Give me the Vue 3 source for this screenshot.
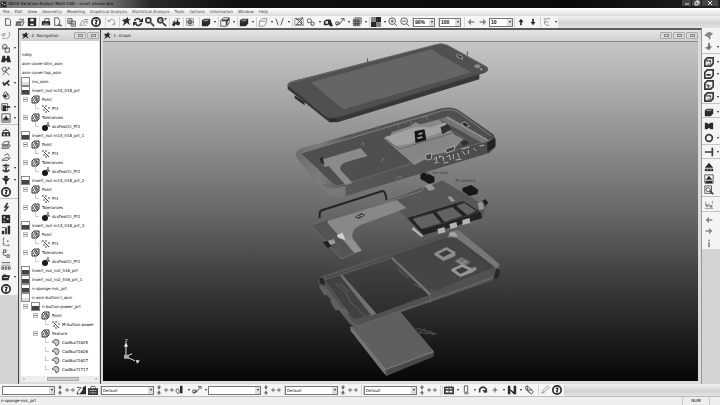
<script setup>
import { h } from 'vue'

// Each icon is a list of [kind, path]: f = dark fill, g = grey fill, l = light fill, s = stroke, b = bold stroke, t = thin grey stroke
const icons = {
  new: [['s', 'M3 2h4l2 2v6H3z']],
  open: [['g', 'M1 5h7l-1 5H1z'], ['s', 'M1 10L3 6h8l-2 4zM5 3q3-2 4 1M10 2v2H8']],
  save: [['f', 'M1 1h10v10H1z'], ['l', 'M4 2h4v3H4zM4 8h4v2H4z']],
  print: [['f', 'M1 5h10v5H1z'], ['s', 'M4 5l1-3h5L9 5'], ['l', 'M3 8h6v1H3z']],
  preview: [['s', 'M2 1h4l2 3v6H2zM6 8l4 3M6 10h5']],
  copy: [['s', 'M1 2h5v6H1zM5 5h5v6H5z'], ['g', 'M2 4h3v3H2zM6 7h3v3H6z']],
  paste: [['t', 'M1 10l3-6 3 2-3 4zM6 3h5M7 5h4M8 7h3M6 10h3']],
  help: [['f', 'M6 0a6 6 0 100 12A6 6 0 006 0zm0 2a4 4 0 110 8 4 4 0 010-8z'], ['f', 'M4 4q2-2 4 0 0 2-1 2v3H5V6h1V5z']],
  undo: [['t', 'M2 6q1-4 5-3 3 2 2 5l-3 1M4 4L2 6 1 3M8 10l2-2']],
  fly: [['f', 'M1 1l4 2 3-3 1 3 3-1-3 3 2 5-4-3-5 4 2-5-3-2 3-1z']],
  rotate: [['b', 'M2 5q1-4 5-3l2 2M10 7q-1 4-5 3L3 8'], ['f', 'M12 1v5H7zM0 11V6h5z']],
  zoom: [['b', 'M7 7l4 4M4 1a3 3 0 100 6 3 3 0 000-6z']],
  zoomwin: [['b', 'M7 7l4 4M4 1a3 3 0 100 6 3 3 0 000-6z'], ['s', 'M9 2h3M10 1v3M3 4h3']],
  run: [['f', 'M1 10l3-6 2 3 2-5 1 4h2l-1 4H7L6 8l-2 3z'], ['t', 'M5 2h6M1 6h5']],
  fit: [['s', 'M6 1v10M1 6h10M4 4h4v4H4z'], ['t', 'M2 2h8v8H2z']],
  cube: [['f', 'M1 4l3-2h7v6l-3 3H1z'], ['g', 'M4 3h6L8 5H2z']],
  cubeopen: [['s', 'M1 4l3-3h7v6l-3 4H1z'], ['l', 'M2 5h5v4H2z'], ['b', 'M8 10V5l3-3M2 4h6']],
  wire: [['t', 'M2 5l3-3h6L9 9 7 11H1zM2 5h7']],
  vee: [['s', 'M1 2l3 8M10 1L7 10']],
  mesh: [['t', 'M1 2h10v8H1z'], ['s', 'M2 1l9 9M3 3q5-1 6 3T4 9M10 2L2 10M8 1h3']],
  gears: [['s', 'M4 2a2 2 0 100 5 2 2 0 000-5zM8 6a2 2 0 100 4 2 2 0 000-4zM6 9l2 2']],
  part: [['f', 'M1 5l3-2h5l3 8H8L7 9 5 10H1z'], ['l', 'M3 5h3v3H3z']],
  arrowtool: [['s', 'M2 11l2-4 2 1 4-6M7 2h4v3M1 6h4v3H1z']],
  grid: [['g', 'M1 2h9v9H1z'], ['s', 'M1 5h9M1 8h9M4 2v9M7 2v9M3 1h8v7']],
  checker: [['f', 'M6 0h6v6H6zM0 6h6v6H0z'], ['g', 'M0 0h6v6H0zM6 6h6v6H6z']],
  plus: [['s', 'M5 1a4 4 0 100 8 4 4 0 000-8zM3 5h4M5 3v4M8 8l3 3']],
  minus: [['s', 'M5 1a4 4 0 100 8 4 4 0 000-8zM3 5h4M8 8l3 3']],
  left: [['g', 'M2 6l4-4v3h4v2H6v3z']],
  right: [['g', 'M10 6L6 2v3H2v2h4v3z']],
  up: [['f', 'M6 2l3 4H7v4H5V6H3z']],
  down: [['f', 'M6 10L3 6h2V2h2v4h2z']],
  branch: [['t', 'M10 2H6L3 5v3l3 2h3M3 6h5M2 2h3']],
  curve: [['t', 'M1 4l4-1-2 4zM6 9q5-1 4-6M2 9h3M9 1l2 2']],
  duplicate: [['s', 'M2 3q3-3 5 0v4H2zM5 6h5v5H5z'], ['t', 'M2 5h5']],
  binoc: [['f', 'M2 2h3v3h2V2h3l2 8H7V8H5v2H0z']],
  hammer: [['s', 'M1 3l4-2 2 3-4 3zM5 6l5 5M10 2L2 11M8 1l3 3']],
  check: [['b', 'M2 5l3 4M10 3l-7 6M7 6l3 3']],
  shapes: [['s', 'M2 7l3-5 3 2-1 4zM7 5a3 3 0 100 6 3 3 0 000-6z'], ['f', 'M3 6h3v3H3z']],
  door: [['s', 'M1 2h7v8H1z'], ['f', 'M2 4h4v7H2z'], ['f', 'M6 5h5v2H6z']],
  picture: [['s', 'M1 1h10v10H1z'], ['g', 'M2 6h8v4H2z'], ['f', 'M6 3l3 5H3z']],
  house: [['s', 'M2 5l4-4 4 4M2 3h7'], ['f', 'M1 5h10v5H1z'], ['l', 'M3 7h2v2H3zM7 7h2v2H7z']],
  layer: [['s', 'M1 6l3-4h6L8 6zM1 10l2-4h8l-2 4z'], ['g', 'M3 7h6v2H3z']],
  ramp: [['s', 'M1 10h7l3-3H5zM4 4l4-2 2 3']],
  anchor: [['b', 'M6 1v9M2 3h8M2 8q4 5 8 0'], ['g', 'M3 5h6v1H3z']],
  funnel: [['f', 'M1 4h10L7 8v3H5V8z'], ['f', 'M4 1h4v3H4z']],
  bolt: [['b', 'M8 1L5 6h3l-4 5']],
  filmdots: [['f', 'M1 1h10v10H1z'], ['l', 'M3 3h2v2H3zM7 5h2v2H7zM3 8h2v1H3z']],
  bars: [['f', 'M1 7h3v4H1zM5 3h2v8H5zM8 1h3v10H8z'], ['s', 'M1 3h4']],
  points: [['g', 'M2 1h2v2H2zM7 4h2v2H7zM2 7h2v2H2zM8 9h2v2H8z'], ['t', 'M3 2v8h7']],
  chain: [['s', 'M3 1h3v3H3zM7 7h3v3H7zM2 4q0 4 4 4']],
  abacus: [['s', 'M1 2h10M1 7h2v3H1zM5 7h2v3H5zM9 7h2v3H9z'], ['t', 'M1 5h10']],
  folder: [['f', 'M1 5l2-2h3l1 1h4l-2 6H1z'], ['l', 'M3 6h6L8 7H3z']],
  camera: [['g', 'M1 4l5-3 5 2-4 4zM5 7l2 4 1-4z'], ['s', 'M1 5l5 2']],
  man: [['g', 'M5 1h2v4h3L6 10 1 7l4-2z'], ['s', 'M6 2v6']],
  boxdots: [['b', 'M1 4l3-3h7v7l-3 3H1z'], ['f', 'M3 5h2v1H3zM6 5h2v1H6zM4 8h3v1H4z'], ['s', 'M2 4h6v6']],
  boxline: [['b', 'M1 4l3-3h7v7l-3 3H1z'], ['f', 'M3 6h5v2H3z']],
  boxcross: [['b', 'M1 4l3-3h7v7l-3 3H1z'], ['s', 'M3 7h5M5 5v5M3 5l4 4']],
  books: [['f', 'M1 2h3l1 2 3-2h3v8H8L6 8l-2 2H1z']],
  ring: [['b', 'M6 2a4 4 0 100 8 4 4 0 000-8z']],
  tee: [['b', 'M10 1v10M1 6h9']],
  warn: [['f', 'M6 1l5 6H1z'], ['f', 'M1 8h10v3H1z'], ['l', 'M3 9h2v1H3zM7 9h2v1H7z']],
  warnbox: [['s', 'M1 1h10v10H1z'], ['f', 'M6 2l4 5H2zM2 8h8v3H2z']],
  lens: [['s', 'M1 1h8v9H1zM5 3a2 2 0 100 5 2 2 0 000-5z'], ['b', 'M7 7l4 4']],
  people: [['t', 'M2 2v4M6 4v4M10 1v4M1 10h10'], ['g', 'M2 5h3v3H2zM7 6h3v3H7z']],
  info: [['g', 'M5 2h2v2H5zM5 5h2v6H5z']],
  vert: [['g', 'M6 0l3 3H7v2H5V3H3zM6 12L3 9h2V7h2v2h2z'], ['f', 'M5 3h2v1H5zM5 8h2v1H5z']],
  horiz: [['g', 'M0 6l3-3v2h2v2H3v2zM12 6L9 3v2H7v2h2v2z']],
  chart: [['f', 'M8 3l4-2v10H8zM1 8l3 3 4-5v5H1z'], ['s', 'M1 3h5L2 8']],
  calc: [['b', 'M1 5h10v6H1zM1 8h10'], ['s', 'M3 5q0-5 3-3 3-2 3 3M4 5v6M8 5v6']],
  table: [['b', 'M1 3h10v7H1zM1 6h10'], ['s', 'M3 1v2M6 1v9M9 1v2']],
  paint: [['f', 'M6 1h3v9H6z'], ['s', 'M2 5q3-1 3 3T2 9q-2-2 0-4z']],
  pen: [['s', 'M4 1h4v6l-2 4-2-3z'], ['g', 'M4 8h5v3H4z']],
  loop: [['b', 'M2 9V5q4-5 8 0v4M7 8h3'], ['f', 'M5 6h4v4z']],
  cross: [['s', 'M6 3v6M3 6h6']],
  skip: [['f', 'M1 1h3v4l4 3V1h3v10H8L4 7v4H1z']],
  pencils: [['s', 'M1 3l3-2 7 7-2 3zM4 1v5h6M2 5l5 5']],
  brush: [['t', 'M2 10l2-4 5-5 2 2-5 5z']],
}

const Icon = (p) =>
  h('svg', { class: 'ico', viewBox: '0 0 12 12', 'aria-hidden': 'true' },
    icons[p.name].map(([k, d]) => h('path', { class: 'k' + k, d })))
Icon.props = ['name']

const menus = ['File', 'Edit', 'View', 'Geometry', 'Modeling', 'Graphical Analysis', 'Statistical Analysis', 'Tools', 'Options', 'Information', 'Window', 'Help']

// Bar tokens: icon name, "^" drop-down caret, "|" narrow gap, "||" wide gap, "=text" small select, "==text" wide select
const parse = (s) => s.split(';').map((t) => {
  if (t === '^') return { kind: 'caret' }
  if (t === '|' || t === '||') return { kind: 'gap', wide: t === '||' }
  if (t[0] === '=') return { kind: 'select', wide: t[1] === '=', text: t.replace(/=/g, '') }
  return { kind: 'icon', name: t }
})
const topBar = parse('new;open;save;|;print;preview;|;copy;paste;help;||;undo;|;fly;rotate;zoom;zoomwin;|;run;|;fit;||;cube;^;|;cubeopen;^;|;cube;^;|;wire;^;vee;^;|;mesh;gears;^;part;arrowtool;^;grid;^;|;checker;^;plus;minus;|;=90%;||;=100;||;left;right;=10;|;up;down;|;branch;^')
const bottomBar = parse('==;vert;horiz;chart;calc;|;==Default;vert;horiz;paint;^;arrowtool;^;==;vert;horiz;||;==Default;vert;horiz;||;|;==Default;vert;horiz;||;|;table;^;pen;^;loop;cross;^;skip;^;pencils;||;brush;help;|')

const rail = (s) => s.split('|').map((g) => g.split(' ').map((n) => ({ name: n.replace('^', ''), caret: n.endsWith('^') })))
const leftRail = rail('curve duplicate^ binoc hammer check^ shapes door^ picture^|house layer ramp anchor^ funnel^ help|bolt filmdots bars points chain abacus folder^ help')
const rightRail = rail('camera man^|boxdots^ boxline^ boxcross boxdots^|cube^|books ring^|tee^|warn warnbox lens|people|left right info')

const nut = (name) => [
  { lvl: 0, ico: 'prt', t: name },
  { lvl: 1, tog: true, ico: 'box', t: 'Point' },
  { lvl: 2, leaf: true, ico: 'pts', t: 'Pt1' },
  { lvl: 1, tog: true, ico: 'box', t: 'Tolerances' },
  { lvl: 2, leaf: true, ico: 'ball', t: 'dcsFeatCr_Pt1' },
]
const tree = [
  { lvl: 0, t: 'mbly' },
  { lvl: 0, t: 'asm-cover-btm_asm' },
  { lvl: 0, t: 'asm-cover-top_asm' },
  { lvl: 0, ico: 'asm', t: 'ms_asm' },
  ...nut('insert_nut-m14_h18_prt'),
  ...nut('insert_nut-m14_h18_prt_1'),
  ...nut('insert_nut-m14_h18_prt_2'),
  ...nut('insert_nut-m14_h18_prt_3'),
  { lvl: 0, ico: 'prt', t: 'insert_nut_m2_h16_prt' },
  { lvl: 0, ico: 'prt', t: 'insert_nut_m2_h16_prt_1' },
  { lvl: 0, ico: 'prt', t: 'n-sponge-mic_prt' },
  { lvl: 0, ico: 'asm', t: 'n-asm-button-I_asm' },
  { lvl: 1, tog: true, ico: 'prt', t: 'n-button-power_prt' },
  { lvl: 2, tog: true, ico: 'box', t: 'Point' },
  { lvl: 3, leaf: true, ico: 'pts', t: 'M-button-power' },
  { lvl: 2, tog: true, ico: 'box', t: 'Feature' },
  { lvl: 3, leaf: true, ico: 'surf', t: 'CadSurf1625' },
  { lvl: 3, leaf: true, ico: 'surf', t: 'CadSurf1626' },
  { lvl: 3, leaf: true, ico: 'surf', t: 'CadSurf1627' },
  { lvl: 3, leaf: true, ico: 'surf', t: 'CadSurf1717' },
]
</script>

<template>
  <div class="app">
    <header class="title">
      <Icon name="filmdots" />
      <span class="caption">3DCS Variation Analyst Multi-CAD - smart phone.wtx</span>
      <div class="winbtns">
        <button aria-label="Minimize"><svg viewBox="0 0 6 6"><path d="M1 4h4" /></svg></button>
        <button aria-label="Restore"><svg viewBox="0 0 6 6"><path d="M1 2h3v3H1zM2 1h3v3" /></svg></button>
        <button class="close" aria-label="Close"><svg viewBox="0 0 6 6"><path d="M1 1l4 4M5 1L1 5" /></svg></button>
      </div>
    </header>

    <nav class="menu">
      <button v-for="m in menus" :key="m">{{ m }}</button>
    </nav>

    <template v-for="(bar, bi) in [topBar, bottomBar]" :key="bi">
      <div class="bar" :class="bi ? 'bar-bottom' : 'bar-top'" role="toolbar">
        <div class="tools">
          <template v-for="(t, i) in bar" :key="i">
            <button v-if="t.kind === 'icon'" class="tool" :class="{ slim: t.name === 'vert' || t.name === 'horiz' }" :aria-label="t.name"><Icon :name="t.name" /></button>
            <button v-else-if="t.kind === 'caret'" class="caret" aria-label="More"></button>
            <span v-else-if="t.kind === 'gap'" class="gap" :class="{ wide: t.wide }"></span>
            <label v-else class="combo" :class="{ wide: t.wide, mid: t.text === '10' }">
              <select aria-label="Value"><option>{{ t.text }}</option></select>
              <span class="drop"></span>
            </label>
          </template>
        </div>
      </div>
    </template>

    <main class="main">
      <aside class="rail left">
        <div class="rail-tools">
          <div v-for="(g, gi) in leftRail" :key="gi" class="group" :style="{ flexGrow: g.length }">
            <div v-for="(t, i) in g" :key="i" class="slot">
              <button class="tool" :aria-label="t.name"><Icon :name="t.name" /></button>
              <button v-if="t.caret" class="caret" aria-label="More"></button>
            </div>
          </div>
        </div>
      </aside>

      <section class="pane nav">
        <div class="pane-head">
          <Icon name="fly" /><span>: 2: Navigation</span>
          <div class="pane-btns"><button aria-label="Minimize"><i></i></button><button aria-label="Maximize"><i></i></button></div>
        </div>
        <ul class="tree">
          <li v-for="(r, i) in tree" :key="i" :class="['row', 'lvl' + r.lvl, { bare: !r.ico }]">
            <span v-if="r.tog" class="toggle"><i></i></span>
            <span v-if="r.leaf" class="elbow"></span>
            <span v-if="r.ico === 'prt' || r.ico === 'asm'" class="cell" :class="r.ico"></span>
            <svg v-else-if="r.ico" class="node" viewBox="0 0 9 9" aria-hidden="true">
              <g v-if="r.ico === 'box'"><path d="M1 3l2-2h5v5L6 8H1z" fill="#ddd" stroke="#333" /><path d="M2 5h1M4 5h1M3 7h1M6 3v4M3 3h3" stroke="#222" /></g>
              <g v-else-if="r.ico === 'pts'" fill="none" stroke="#444"><path d="M1 2h2M2 6h2M5 1v2M5 5l3 3M7 4h2M3 3l2 2M5 7v2" /></g>
              <g v-else-if="r.ico === 'ball'"><circle cx="4" cy="6" r="3" fill="#1a1a1a" /><path d="M5 3h3v2M6 1h2" fill="none" stroke="#333" /></g>
              <g v-else><path d="M1 4q3-4 6-2 2 2 0 5L5 8q1-3-4-4z" fill="#ccc" stroke="#666" /></g>
            </svg>
            <span>{{ r.t }}</span>
          </li>
        </ul>
        <div class="hscroll"><b>‹</b><span class="thumb"></span><b>›</b></div>
      </section>

      <section class="pane graph">
        <div class="pane-head">
          <Icon name="fly" /><span>: 1: Graph</span>
          <div class="pane-btns"><button aria-label="Minimize"><i></i></button><button aria-label="Maximize"><i></i></button><button aria-label="Close"><i></i></button></div>
        </div>
        <div class="canvas">
          <svg class="scene" viewBox="103 42 596 339" role="img" aria-label="Exploded view of a smart phone">
            <defs>
              <linearGradient id="rim" x1="0" x2="1"><stop offset="0" stop-color="#6c6c6c" /><stop offset=".12" stop-color="#7c7c7c" /><stop offset=".25" stop-color="#585858" /><stop offset="1" stop-color="#4a4a4a" /></linearGradient>
              <linearGradient id="well" x1="0" x2="0" y1="0" y2="1"><stop offset="0" stop-color="#444" /><stop offset="1" stop-color="#2c2c2c" /></linearGradient>
            </defs>

            <!-- battery -->
            <path d="M351 327v4l32 41 4 4 47-20v-5z" fill="#737373" />
            <path d="M386 370l48-18v5l-47 19z" fill="#484848" />
            <path d="M351 327l49-16 34 40-48 19z" fill="#5f5f5f" />
            <path d="M351 327l35 43 48-18" fill="none" stroke="#7c7c7c" />
            <path d="M415 331l4-3 2 5 4-4 2 5 4-3 2 4 4-1M417 333l20 1M420 329l14 4" fill="none" stroke="#4c4c4c" />

            <!-- lower housing -->
            <path d="M318 280q1-4 7-5l65-22 56-20q10-5 17 0l37 31q3 8-1 12l-7 5-60 21-49 16-23 8q-7 2-11-3l-29-37z" fill="#515151" />
            <path d="M325 279l66-22 58-20q7-3 12 0l34 30-64 25-51 19-22 8q-3 1-6-2z" fill="#414141" />
            <path d="M391 258l57-20q7-3 10-1l31 31-59 26z" fill="#454545" />
            <path d="M342 275l49-17 39 37-55 20z" fill="url(#well)" />
            <path d="M340 275l2-1 35 40-5 2zM391 258l2-1 39 37-2 2z" fill="#727272" />
            <path d="M336 283l11 11 4 8 14 14M340 283l9 9M398 268l5 6 6 4M414 284l7 4" fill="none" stroke="#626262" />
            <path d="M323 280q-3 0-1 4l30 39q4 4 10 2l23-8 48-17 62-23" fill="none" stroke="#616161" stroke-width="2" />
            <path d="M450 232q9-4 14 2l36 30-2 5-38-29q-5-4-12-2z" fill="#777" />
            <path d="M450 233q7-3 8 4l-8-1z" fill="#a4a4a4" />
            <path d="M319 279q4-3 6 2v5l-4-2zM497 268l4 2-2 8-5 1z" fill="#272727" />
            <path d="M320 287l4-1 5 8-4 1zM331 301l4-1 6 9-5 1zM340 310l6-1 3 4-5 2zM431 296v7M431 290l3 2" fill="#606060" stroke="#626262" />
            <path d="M325 277l65-22v4l-65 21z" fill="#4c4c4c" stroke="#5c5c5c" />
            <path d="M435 253l12-6 9 5v4l-12 5-9-6z" fill="#8c8c8c" /><path d="M439 254l8-4 5 3-8 4z" fill="#3c3c3c" />
            <path d="M455 261l7-4 9 5-6 5z" fill="#717171" /><path d="M458 261l5 3 4-3" fill="none" stroke="#a2a2a2" />
            <path d="M452 269l11-5 11 5v3l-13 5-9-6z" fill="#969696" /><path d="M456 270l7-3 6 3-8 4z" fill="#3b3b3b" />
            <circle cx="475" cy="269" r="2" fill="#929292" />

            <!-- circuit board -->
            <path d="M311 225l17-6 27 34-13 6z" fill="#545454" stroke="#6e6e6e" />
            <path d="M390 200l53-20 44 25-4 13-59 18-12-12z" fill="#565656" />
            <path d="M390 201l32-10 2-4 5-1 14-6 43 25" fill="none" stroke="#7a7a7a" />
            <path d="M328 221l69-21 10 8-46 17q-10 5-8 13l9 12-7 3-27-30z" fill="#888" />
            <path d="M355 217l7-4 4 2-7 4z" fill="#3b3b3b" /><path d="M357 217l7-2" stroke="#999" />
            <path d="M320 218v-4q0-3 3-4l60-19q3 0 4 9" fill="none" stroke="#242424" stroke-width="2" />
            <path d="M337 235l6-2 3 7-7-2z" fill="#d1d1d1" /><path d="M345 240l7-2 3 5 7 8-7 2z" fill="#919191" />
            <path d="M323 242l5-1 4 5-4 2z" fill="#1e1e1e" /><path d="M328 241l6-2 2 4-5 2z" fill="#9a9a9a" />
            <path d="M408 218l56-17 18 12-2 6-56 16z" fill="#232323" />
            <path d="M413 219l20-6 9 10-20 6zM437 212l16-5 10 9-18 6zM457 206l8-3 12 8-9 4z" fill="#626262" />
            <path d="M414 218l19-5M438 211l15-4M457 205l9-3M424 229l56-17" stroke="#3c3c3c" />
            <path d="M438 229l7-2 1 5-7 2zM450 224l7-2 1 5-7 2zM463 220l7-2 1 5-8 2zM414 227l10 9-2 1-10-8z" fill="#b4b4b4" />
            <path d="M448 197l3-1 5 5-4 1zM478 203l5-1 2 7-5 1zM425 186l6-3 5 6-6 2z" fill="#969696" />
            <path d="M475 215l6-2 2 5-7 2zM483 201l3-2 3 4-3 3z" fill="#202020" />
            <path d="M421 174l5-2 9 5v5l-5 2-9-5z" fill="#171717" /><path d="M425 172l4 3" stroke="#777" />
            <path d="M463 188l9-3 7 5-1 4-8 2-7-5z" fill="#171717" />
            <text x="433" y="174" class="tag">ear-jack</text><text x="456" y="182" class="tag">JP-camera</text>

            <!-- middle frame -->
            <path d="M296 154q1-4 7-6l132-38q16-6 26 1l33 23q4 7 1 14l-5 5-147 44q-9 2-14-2l-32-37z" fill="url(#rim)" />
            <path d="M301 153l137-41q12-5 20 0l32 24-14 5-130 43q-9 3-13-1z" fill="#4f4f4f" />
            <path d="M323 184q9 4 22 0l148-45" fill="none" stroke="#656565" />
            <path d="M323 186q9 5 23 0v10q-12 4-19-2z" fill="#787878" />
            <path d="M301 153l137-41q12-5 21 0l33 24" fill="none" stroke="#808080" />
            <path d="M488 142l8-4v9l-8 5z" fill="#242424" />
            <path d="M321 160l40-12 7 8-21 6q-8 3-6 8l12 13-7 2-17-19-4 1z" fill="#8a8a8a" />
            <path d="M320 158l3-1 2 8-4-3z" fill="#292929" />
            <path d="M384 138l7-2 1-4 18-6 6-4 5 2 19-5 16 16 8 4-11 12-19 4-19 10-14-12z" fill="#898989" />
            <path d="M385 137l30-10 16 0 15-5 3 7-40 15-13 2z" fill="#a2a2a2" />
            <path d="M401 149l42-14 12 10-31 12-13 5z" fill="#858585" /><path d="M386 139l14 10 56-17 10 8" fill="none" stroke="#656565" />
            <path d="M415 131l10-2 2 11-11 3z" fill="#161616" /><path d="M419 134l4-1M418 138l5-1" stroke="#999" stroke-width="2" />
            <path d="M440 119l9-3 42 25-8 2z" fill="#747474" /><path d="M447 117l41 23" stroke="#a0a0a0" />
            <path d="M441 127l7-3 4 5-9 5zM461 142l5-2 4 3-6 3z" fill="#303030" />
            <path d="M462 123l4-1 4 4-4 1z" fill="#242424" stroke="#999" />
            <path d="M426 155l6-2v6l-5 1zM446 149l9-3v4l-8 3z" fill="#444" stroke="#a5a5a5" />
            <path d="M434 160l3-3v4M440 158v-2l4 1v4M447 157l3-2 1 5M454 154v5M458 153l2 5M463 151l3 4M469 150v4M474 148l3 3M435 163l4-1M444 163l5-1M456 160l6-1M462 149l8-2M480 146l5-1" fill="none" stroke="#b5b5b5" />
            <path d="M374 128l4-2v4l4-1M391 126l8-3v4M361 145l3-3v4M381 162l3-4 1 3M397 178l4-2 2 3-5 2zM422 118l6-2v4M406 124v-3l5-1v4M315 170l4-2" fill="none" stroke="#707070" />

            <!-- screen -->
            <path d="M288 86v3l13 10 25 20 4 3h8l142-43v-8z" fill="#373737" />
            <path d="M295 95l10 7v3l-10-7zM330 117l6-1 1 5-7 1z" fill="#2a2a2a" />
            <path d="M288 85q-1-2 4-4l142-36q8-3 14 0l40 22q2 4-2 5l-147 45q-7 2-12 0z" fill="#505050" />
            <path d="M288 86q-1-3 4-4l142-37q8-3 14 0l40 22" fill="none" stroke="#696969" />
            <path d="M311 82l120-33 41 23-128 37z" fill="#656565" />
            <path d="M326 116l13 1 147-45" fill="none" stroke="#464646" />
            <path d="M458 54l5 2v3l-6-3z" fill="#303030" stroke="#999" /><ellipse cx="478" cy="66" rx="3" ry="2" fill="#888" /><circle cx="482" cy="69" r="1" fill="#bbb" />
            <path d="M368 58v4M468 51v4" stroke="#555" />

            <!-- axes -->
            <path d="M126 357v-11M126 357l9 4M126 357l6-3" stroke="#ddd" fill="none" /><path d="M124 347l2-5 2 5zM136 360l4 1-3 3z" fill="#e5e5e5" />
            <path d="M124 355h5v4h-5z" fill="#aaa" /><text x="125" y="342" class="axis">Z</text>
          </svg>
        </div>
      </section>

      <aside class="rail right">
        <div class="rail-tools">
          <div v-for="(g, gi) in rightRail" :key="gi" class="group" :style="{ flexGrow: g.length }">
            <div v-for="(t, i) in g" :key="i" class="slot">
              <button class="tool" :aria-label="t.name"><Icon :name="t.name" /></button>
              <button v-if="t.caret" class="caret" aria-label="More"></button>
            </div>
          </div>
        </div>
      </aside>
    </main>

    <footer class="status"><span>n-sponge-mic_prt</span><span class="num">NUM</span></footer>
  </div>
</template>

<style>
body {
  margin: 0;
}
.ico {
  display: block;
  width: 10px;
  height: 10px;
  flex: none;
}
.ico path {
  fill: none;
}
.ico .kf {
  fill: #2a2a2a;
}
.ico .kg {
  fill: #888;
}
.ico .kl {
  fill: #eee;
}
.ico .ks {
  stroke: #444;
}
.ico .kb {
  stroke: #3a3a3a;
  stroke-width: 2;
}
.ico .kt {
  stroke: #888;
}
</style>

<style scoped>
.app {
  display: flex;
  flex-direction: column;
  min-height: 100vh;
  overflow: hidden;
  background: #e6e6e6;
  color: #000;
  font: 4px/8px "DejaVu Sans", sans-serif;
  white-space: nowrap;
}
button {
  display: flex;
  align-items: center;
  justify-content: center;
  margin: 0;
  padding: 0;
  border: 0;
  background: none;
  color: inherit;
  font: inherit;
}
.title {
  display: flex;
  align-items: center;
  height: 8px;
  background: linear-gradient(90deg, #777 0, #8a8a8a 90px, #666 115px, #2a2a2a 150px, #111 230px, #0b0b0b 80%, #222);
  color: #000;
}
.title .ico {
  width: 7px;
  height: 7px;
}
.caption {
  margin-left: 1px;
}
.winbtns {
  display: flex;
  align-self: stretch;
  gap: 1px;
  margin-left: auto;
  padding-right: 2px;
}
.winbtns button {
  width: 9px;
  height: 6px;
  background: #444;
}
.winbtns .close {
  width: 16px;
}
.winbtns svg {
  width: 6px;
  height: 6px;
  fill: none;
  stroke: #eee;
}
.menu {
  display: flex;
  gap: 5px;
  height: 8px;
  padding-left: 3px;
  background: linear-gradient(#fff, #dcdcdc);
  color: #444;
}
.bar {
  display: flex;
  background: linear-gradient(#f0f0f0, #d2d2d2 60%, #e4e4e4);
}
.bar-top {
  height: 12px;
}
.bar-bottom {
  order: 2;
  height: 13px;
  border-bottom: 1px solid #bbb;
  box-sizing: border-box;
}
.tools {
  display: flex;
  align-items: center;
  padding-left: 2px;
  background: #f5f5f5;
}
.tool {
  flex: none;
  width: 12px;
  height: 12px;
}
.tool.slim {
  width: 10px;
}
.caret {
  flex: none;
  width: 5px;
  height: 12px;
}
.caret::before,
.drop::before {
  content: "";
  border: 1px solid transparent;
  border-top: 2px solid #222;
  border-bottom: 0;
}
.gap {
  flex: none;
  width: 1px;
  height: 10px;
  border-right: 1px solid #d2d2d2;
}
.gap.wide {
  width: 3px;
}
.combo {
  display: grid;
  flex: none;
  width: 22px;
  height: 9px;
}
.combo.mid {
  width: 24px;
}
.combo.wide {
  width: 53px;
}
.combo select {
  grid-area: 1 / 1;
  appearance: none;
  box-sizing: border-box;
  width: 100%;
  height: 9px;
  margin: 0;
  padding: 0 1px;
  border: 1px solid #777;
  border-radius: 0;
  background: #fff;
  color: #111;
  font: inherit;
  line-height: 7px;
}
.combo:not(.wide) select {
  font-family: "Liberation Sans", sans-serif;
  font-size: 5px;
  font-weight: bold;
}
.drop {
  grid-area: 1 / 1;
  display: flex;
  align-items: center;
  justify-content: center;
  justify-self: end;
  width: 5px;
  height: 7px;
  margin: 1px;
  background: #ddd;
  pointer-events: none;
}
.main {
  display: flex;
  flex: 1;
}
.rail {
  display: flex;
  flex-direction: column;
  flex: 0 0 18px;
  background: #d4d4d4;
}
.rail-tools {
  display: flex;
  flex-direction: column;
  box-sizing: border-box;
  padding-top: 2px;
  background: #f4f4f4;
}
.left .rail-tools {
  flex: 0 0 75%;
}
.right .rail-tools {
  flex: 0 0 62%;
}
.group {
  display: flex;
  flex-direction: column;
  flex-basis: 0;
}
.group + .group {
  border-top: 1px solid #c4c4c4;
  padding-top: 2px;
}
.slot {
  display: flex;
  flex: 1 1 0;
  align-items: center;
  min-height: 0;
}
.pane {
  display: flex;
  flex-direction: column;
  box-sizing: border-box;
  border-top: 2px solid #5c5c5c;
  border-left: 1px solid #444;
  background: #dcdcdc;
  min-width: 0;
}
.nav {
  flex: 0 0 82px;
  padding: 0 1px 2px 2px;
}
.graph {
  flex: 1;
  padding: 0 3px 3px 2px;
  border-right: 1px solid #999;
}
.pane-head {
  display: flex;
  align-items: center;
  flex: none;
  height: 11px;
  background: linear-gradient(#e6e6e6, #cfcfcf);
  color: #222;
}
.pane-head .ico {
  width: 8px;
  height: 8px;
}
.pane-btns {
  display: flex;
  margin-left: auto;
  gap: 1px;
}
.pane-btns button {
  box-sizing: border-box;
  width: 12px;
  height: 7px;
  border: 1px solid #aaa;
  border-radius: 1px;
  background: #d8d8d8;
}
.pane-btns i {
  width: 3px;
  height: 1px;
  border: 1px solid #888;
}
.tree {
  flex: 1;
  margin: 0;
  padding: 9px 0 0;
  overflow: hidden;
  background: #fff;
  list-style: none;
}
.row {
  display: flex;
  align-items: center;
  gap: 2px;
  height: 9px;
}
.row.bare {
  padding-left: 1px;
}
.lvl2 {
  padding-left: 10px;
}
.lvl3 {
  padding-left: 20px;
}
.toggle {
  display: flex;
  justify-content: center;
  align-items: center;
  width: 8px;
}
.toggle i {
  width: 3px;
  height: 3px;
  border: 1px solid #bbb;
  background: linear-gradient(#fff 1px, #777 1px, #777 2px, #fff 2px);
}
.elbow {
  width: 4px;
  height: 5px;
  margin: 0 0 4px 4px;
  border-left: 1px solid #ccc;
  border-bottom: 1px solid #ccc;
  box-sizing: border-box;
}
.cell {
  box-sizing: border-box;
  width: 9px;
  height: 9px;
  border: 1px solid #888;
}
.prt {
  background: linear-gradient(#fff 3px, #444 3px);
}
.asm {
  background: linear-gradient(#fff 4px, #ddd 4px);
}
.node {
  width: 9px;
  height: 9px;
}
.hscroll {
  display: flex;
  align-items: center;
  justify-content: space-between;
  height: 6px;
  padding: 0 2px;
  background: #eee;
  line-height: 6px;
}
.thumb {
  width: 32px;
  height: 4px;
  margin-left: 6px;
  box-sizing: border-box;
  border: 1px solid #aaa;
  background: #ccc;
}
.canvas {
  flex: 1;
  display: flex;
  border-top: 1px solid #888;
  background: linear-gradient(#c6c6c6, #686868 50%, #3e3e3e 70%, #060606);
}
.scene {
  flex: 1;
  width: 100%;
  min-width: 0;
}
.tag {
  fill: #3e3e3e;
}
.axis {
  fill: #ddd;
}
.right .slot {
  padding-left: 1px;
}
.status {
  display: flex;
  order: 3;
  justify-content: space-between;
  height: 8px;
  padding: 0 1px;
  background: #eee;
}
.num {
  width: 26px;
  margin-right: 9px;
  border: solid #ccc;
  border-width: 0 1px;
  text-align: center;
}
</style>
